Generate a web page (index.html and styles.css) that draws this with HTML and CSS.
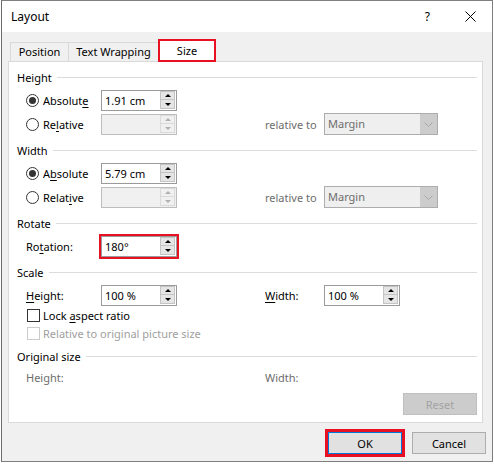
FILE: index.html
```html
<!DOCTYPE html>
<html lang="en">
<head>
    <meta charset="UTF-8">
    <title>Layout</title>
    <link rel="stylesheet" href="styles.css">
</head>
<body>
    <div class="dialog">
        <!-- Title bar -->
        <div class="titlebar">
            <span class="title">Layout</span>
            <span class="help">?</span>
            <svg class="close" width="11" height="11" viewBox="0 0 11 11">
                <path d="M0.5 0.5 L10.5 10.5 M10.5 0.5 L0.5 10.5" stroke="#000" stroke-width="1" fill="none"/>
            </svg>
        </div>

        <!-- Tabs -->
        <div class="tabs">
            <div class="tab tab-pos">Position</div>
            <div class="tab tab-wrap">Text Wrapping</div>
            <div class="tab tab-size active">Size</div>
        </div>

        <div class="panel">
            <!-- Height -->
            <div class="group-head"><span>Height</span></div>
            <div class="row first">
                <label class="c1"><span class="radio on"></span><span>Absolut<u>e</u></span></label>
                <div class="spin-input"><span class="val">1.91 cm</span><span class="spin"><i class="up"></i><i class="down"></i></span></div>
            </div>
            <div class="row">
                <label class="c1"><span class="radio"></span><span>Re<u>l</u>ative</span></label>
                <div class="spin-input disabled"><span class="val"></span><span class="spin"><i class="up"></i><i class="down"></i></span></div>
                <span class="gap"></span>
                <span class="c3 muted">relative to</span>
                <div class="select"><span class="val">Margin</span><span class="arrow"><svg width="9" height="5" viewBox="0 0 9 5"><path d="M0.5 0.5 L4.5 4.5 L8.5 0.5" stroke="#a8a8a8" fill="none"/></svg></span></div>
            </div>

            <!-- Width -->
            <div class="group-head"><span>Width</span></div>
            <div class="row first">
                <label class="c1"><span class="radio on"></span><span>A<u>b</u>solute</span></label>
                <div class="spin-input"><span class="val">5.79 cm</span><span class="spin"><i class="up"></i><i class="down"></i></span></div>
            </div>
            <div class="row">
                <label class="c1"><span class="radio"></span><span>Relat<u>i</u>ve</span></label>
                <div class="spin-input disabled"><span class="val"></span><span class="spin"><i class="up"></i><i class="down"></i></span></div>
                <span class="gap"></span>
                <span class="c3 muted">relative to</span>
                <div class="select"><span class="val">Margin</span><span class="arrow"><svg width="9" height="5" viewBox="0 0 9 5"><path d="M0.5 0.5 L4.5 4.5 L8.5 0.5" stroke="#a8a8a8" fill="none"/></svg></span></div>
            </div>

            <!-- Rotate -->
            <div class="group-head"><span>Rotate</span></div>
            <div class="row first">
                <span class="c1"><span>Ro<u>t</u>ation:</span></span>
                <div class="spin-input marked"><span class="val">180°</span><span class="spin"><i class="up"></i><i class="down"></i></span></div>
            </div>

            <!-- Scale -->
            <div class="group-head scale-head"><span>Scale</span></div>
            <div class="row first">
                <span class="c1"><span><u>H</u>eight:</span></span>
                <div class="spin-input"><span class="val">100 %</span><span class="spin"><i class="up"></i><i class="down"></i></span></div>
                <span class="gap"></span>
                <span class="c3"><u>W</u>idth:</span>
                <div class="spin-input"><span class="val">100 %</span><span class="spin"><i class="up"></i><i class="down"></i></span></div>
            </div>
            <div class="check-row">
                <span class="checkbox"></span><span>Lock <u>a</u>spect ratio</span>
            </div>
            <div class="check-row off">
                <span class="checkbox"></span><span>Relative to original picture size</span>
            </div>

            <!-- Original size -->
            <div class="group-head small"><span>Original size</span></div>
            <div class="row orig">
                <span class="c1 muted">Height:</span>
                <span class="blank"></span>
                <span class="gap"></span>
                <span class="c3 muted">Width:</span>
            </div>

            <div class="reset-line">
                <button class="btn reset" disabled>Reset</button>
            </div>
        </div>

        <div class="buttons">
            <button class="btn ok">OK</button>
            <button class="btn">Cancel</button>
        </div>
    </div>
</body>
</html>
```

FILE: styles.css
```css
body {
  margin: 0;
  background: #fff;
  font-family: "Noto Sans", "Segoe UI", sans-serif;
  font-size: 11px;
  color: #000;
}

.dialog {
  box-sizing: border-box;
  width: 492px;
  height: 462px;
  margin-left: 1px;
  border: 1px solid #7f7f7f;
  border-left-color: #6b6b6b;
  background: #f0f0f0;
}

/* title bar */
.titlebar {
  height: 31px;
  background: #fff;
  display: flex;
  align-items: center;
  padding-left: 9px;
}

.title {
  font-size: 12px;
}

.help {
  margin-left: auto;
  font-size: 12px;
  margin-right: 35px;
}

.close {
  margin-right: 16px;
}

/* tabs */
.tabs {
  display: flex;
  align-items: flex-end;
  margin-top: 7px;
  padding-left: 8px;
  height: 22px;
}

.tab {
  box-sizing: border-box;
  height: 19px;
  border: 1px solid #d9d9d9;
  border-bottom: none;
  margin-right: -1px;
  text-align: center;
  line-height: 18px;
}

.tab-pos { width: 59px; }
.tab-wrap { width: 91px; }

.tab.active {
  position: relative;
  z-index: 1;
  width: 58px;
  height: 23px;
  margin-bottom: -1px;
  background: #fff;
  border: 2px solid #e81123;
  line-height: 19px;
}

/* main panel */
.panel {
  box-sizing: border-box;
  width: 475px;
  height: 362px;
  margin-left: 6px;
  padding: 0 5px 0 8px;
  background: #fff;
  border: 1px solid #d9d9d9;
}

.group-head {
  display: flex;
  align-items: center;
  height: 22px;
  margin-top: 4px;
}

.group-head::after {
  content: "";
  flex: 1;
  height: 1px;
  margin-left: 5px;
  background: #dcdcdc;
}

.scale-head { margin-top: 4px; }
.group-head.small { height: 20px; }

.row {
  display: flex;
  align-items: center;
  height: 22px;
  margin-top: 2px;
  padding-left: 9px;
}

.row.first { margin-top: 1px; }
.row.orig { height: 20px; margin-top: 1px; }

.c1 {
  width: 75px;
  display: flex;
  align-items: center;
}

.gap { width: 88px; }
.blank { width: 76px; }
.c3 { width: 59px; }

.muted { color: #6d6d6d; }

u { text-underline-offset: 2px; }

/* radio + checkbox */
.radio {
  box-sizing: border-box;
  width: 13px;
  height: 13px;
  border: 1px solid #333;
  border-radius: 50%;
  margin-right: 4px;
  display: flex;
  align-items: center;
  justify-content: center;
}

.radio.on::after {
  content: "";
  width: 7px;
  height: 7px;
  border-radius: 50%;
  background: #333;
}

.check-row {
  display: flex;
  align-items: center;
  height: 18px;
  padding-left: 10px;
}

.checkbox {
  box-sizing: border-box;
  width: 13px;
  height: 13px;
  border: 1px solid #333;
  margin-right: 3px;
}

.check-row.off { color: #a0a0a0; }
.check-row.off .checkbox { border-color: #cccccc; }

/* spin box inputs */
.spin-input {
  box-sizing: border-box;
  width: 76px;
  height: 21px;
  border: 1px solid #9a9a9a;
  display: flex;
  align-items: center;
  background: #fff;
}

.spin-input .val {
  flex: 1;
  padding-left: 3px;
}

.spin-input.disabled {
  background: #f0f0f0;
  border-color: #bdbdbd;
}

.spin-input.marked {
  outline: 2px solid #e81123;
}

.spin {
  display: flex;
  flex-direction: column;
  margin-right: 1px;
}

.spin i {
  box-sizing: border-box;
  width: 15px;
  height: 9px;
  background: #e5e5e5;
  border: 1px solid #c4c4c4;
  display: flex;
  align-items: center;
  justify-content: center;
}

.spin i.down { border-top: none; height: 9px; }

.spin i::after {
  content: "";
  border-left: 3px solid transparent;
  border-right: 3px solid transparent;
}

.spin i.up::after { border-bottom: 3px solid #000; }
.spin i.down::after { border-top: 3px solid #000; }

.spin-input.disabled .spin i {
  background: #f0f0f0;
  border-color: #dadada;
}

.spin-input.disabled .spin i.up::after { border-bottom-color: #b0b0b0; }
.spin-input.disabled .spin i.down::after { border-top-color: #b0b0b0; }

/* dropdown */
.select {
  box-sizing: border-box;
  width: 114px;
  height: 22px;
  border: 1px solid #adadad;
  background: #efefef;
  display: flex;
  color: #6d6d6d;
}

.select .val {
  flex: 1;
  padding-left: 3px;
  line-height: 20px;
}

.select .arrow {
  width: 17px;
  background: #cccccc;
  display: flex;
  align-items: center;
  justify-content: center;
}

/* buttons */
.btn {
  box-sizing: border-box;
  width: 74px;
  height: 22px;
  border: 1px solid #adadad;
  background: #e1e1e1;
  font-family: inherit;
  font-size: 11px;
  color: #000;
  padding: 0;
}

.reset-line {
  display: flex;
  justify-content: flex-end;
  margin-top: 6px;
  padding-right: 0;
}

.btn.reset {
  background: #cccccc;
  border-color: #bfbfbf;
  color: #a3a3a3;
}

.buttons {
  display: flex;
  justify-content: flex-end;
  gap: 10px;
  margin-top: 9px;
  padding-right: 6px;
}

.btn.ok {
  border-color: #0078d7;
  outline: 3px solid #e81123;
}
```
